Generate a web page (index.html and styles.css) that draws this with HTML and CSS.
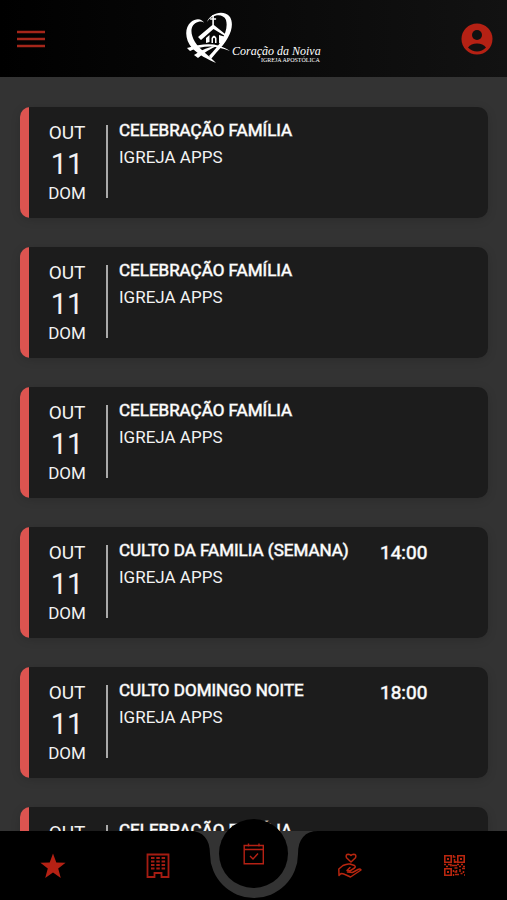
FILE: index.html
```html
<!DOCTYPE html>
<html lang="pt-BR">
<head>
<meta charset="utf-8">
<meta name="viewport" content="width=device-width, initial-scale=1">
<title>Coração da Noiva</title>
<link rel="stylesheet" href="styles.css">
</head>
<body>
<div class="app">
  <header class="topbar">
    <button class="icon-button" type="button" aria-label="Menu">
      <svg width="30" height="20" viewBox="0 0 30 20"><path d="M1 3h28M1 10h28M1 17h28" stroke="#a5261a" stroke-width="2.4"/></svg>
    </button>
    <a class="brand" href="#" aria-label="Coração da Noiva Igreja Apostólica">
      <svg width="138" height="54" viewBox="187 11 138 54" fill="#fff">
        <path d="M206 23C203 17 197 17 192 21C185 27 186 39 193 47C200 54 208 58 217 62C211 55 201 49 196 41C190 31 192 23 199 21C203 20 205 21 206 23Z"/>
        <path d="M208 21C211 12 225 8 231 16C236 25 231 38 217 52L212 58L210 55C222 43 230 30 227 19C224 12 213 13 208 21Z"/>
        <path d="M213.300 14h1.600v3.200h2.200v1.500h-2.200V24L228 34.500L226 35L214.500 28L202 39L199 36L213.300 24V18.700h-2.200V17.200h2.200Z"/>
        <path d="M207 37L210.500 34V41L207 42ZM212.500 42V37Q215 32 217.500 37V42L216 42V37.500Q215 36 214 37.500V42ZM220 34L225 35.500V43L220 42Z"/>
        <path d="M188 47Q203 42 215 43.500Q225 45.500 231 50Q219 45.500 211 45.500Q200 45.500 191 50ZM195 54Q206 46 219 44.500Q208 49 199 57Z"/>
        <text class="brand-name" x="233" y="54">Coração da Noiva</text>
        <text class="brand-sub" x="262" y="61">IGREJA APOSTÓLICA</text>
      </svg>
    </a>
    <button class="icon-button" type="button" aria-label="Perfil">
      <svg width="32" height="32" viewBox="0 0 32 32"><circle cx="16" cy="16" r="15.500" fill="#b52114"/><circle cx="16" cy="12" r="5" fill="#111"/><path d="M7 24.500Q10 20.500 16 20.500T25 24.500Q21 28.500 16 28.500T7 24.500Z" fill="#111"/></svg>
    </button>
  </header>

  <main class="events">
    <article class="event">
      <div class="date"><span class="month">OUT</span><span class="day">11</span><span class="weekday">DOM</span></div>
      <div class="info"><h2>CELEBRAÇÃO FAMÍLIA</h2><p>IGREJA APPS</p></div>
    </article>
    <article class="event">
      <div class="date"><span class="month">OUT</span><span class="day">11</span><span class="weekday">DOM</span></div>
      <div class="info"><h2>CELEBRAÇÃO FAMÍLIA</h2><p>IGREJA APPS</p></div>
    </article>
    <article class="event">
      <div class="date"><span class="month">OUT</span><span class="day">11</span><span class="weekday">DOM</span></div>
      <div class="info"><h2>CELEBRAÇÃO FAMÍLIA</h2><p>IGREJA APPS</p></div>
    </article>
    <article class="event">
      <div class="date"><span class="month">OUT</span><span class="day">11</span><span class="weekday">DOM</span></div>
      <div class="info"><h2>CULTO DA FAMILIA (SEMANA)</h2><p>IGREJA APPS</p></div>
      <time class="time">14:00</time>
    </article>
    <article class="event">
      <div class="date"><span class="month">OUT</span><span class="day">11</span><span class="weekday">DOM</span></div>
      <div class="info"><h2>CULTO DOMINGO NOITE</h2><p>IGREJA APPS</p></div>
      <time class="time">18:00</time>
    </article>
    <article class="event">
      <div class="date"><span class="month">OUT</span><span class="day">11</span><span class="weekday">DOM</span></div>
      <div class="info"><h2>CELEBRAÇÃO FAMÍLIA</h2><p>IGREJA APPS</p></div>
    </article>
  </main>

  <nav class="tabbar">
    <svg class="notch" width="128" height="69" viewBox="0 0 128 69"><path d="M0 0C13 0 20 8 20 23A44 44 0 0 0 108 23C108 8 115 0 128 0Z" fill="#333"/></svg>
    <a class="tab" href="#" aria-label="Destaques">
      <svg width="26" height="26" viewBox="0 0 26 26"><path d="M13 .500L16.300 9.500L25.600 9.700L18.200 15.500L20.800 25L13 19.600L5.200 25L7.800 15.500L.400 9.700L9.700 9.500Z" fill="#b52114"/></svg>
    </a>
    <a class="tab" href="#" aria-label="Igreja">
      <svg width="24" height="26" viewBox="0 0 24 26" fill="none" stroke="#a51c12"><path d="M1.500 1.500h21v22.500h-7v-4h-7v4h-7Z" stroke-width="1.800"/><path d="M5 5h3.500M10.300 5h3.500M15.600 5h3.500M5 8.500h3.500M10.300 8.500h3.500M15.600 8.500h3.500M5 12h3.500M10.300 12h3.500M15.600 12h3.500M5 15.500h3.500M10.300 15.500h3.500M15.600 15.500h3.500" stroke-width="1.800"/></svg>
    </a>
    <a class="tab tab-main" href="#" aria-label="Agenda">
      <svg width="22" height="22" viewBox="0 0 22 22" fill="none" stroke="#b52114" stroke-width="1.400"><path d="M1.200 2.500h19.100v18.300H1.200ZM1.200 6.500h19.100M5.500.500v3M16 .500v3M7 13l3 3 5-5.500"/></svg>
    </a>
    <a class="tab" href="#" aria-label="Contribuições">
      <svg width="26" height="26" viewBox="0 0 26 26" fill="none" stroke="#b8260f" stroke-width="1.500" stroke-linejoin="round" stroke-linecap="round"><path d="M14 9L9.500 4.800Q8.200 1.300 11.500 1.200Q13 1.200 14 2.500Q15 1.200 16.500 1.200Q19.800 1.300 18.500 4.800Z"/><path d="M2 22.500L4 20.500Q6 20.500 8 21.500L13.500 24L24 17Q23 15.500 21 16.500L15.500 19.500L10.500 19M2 22L1.800 16L6 12.500Q10 10.500 13 11L17.500 12.500Q19 13.800 17.500 15L13 17.800L10 17.500L13 14.500"/></svg>
    </a>
    <a class="tab" href="#" aria-label="QR Code">
      <svg width="21" height="21" viewBox="0 0 21 21" fill="none" stroke="#b8260f"><path d="M.800.800h6.400v6.400H.800ZM13.800.800h6.400v6.400h-6.400ZM.800 13.800h6.400v6.400H.800Z" stroke-width="1.600"/><path d="M3 4h2M16 4h2M3 17h2" stroke-width="2"/><path d="M9.500 0v2h2M10.500 4v4M12 6v2M0 9.500h2M4 9.500h3v2M2 11.500h2M8 10.500h5M13 9.500h2M17 9.500h2M19 11.500h2M15 11.500h2M10.500 13h3M9.500 15v2M12.500 15v2h-2M11 19.500h4M16 14v3M18 13.500h3M19.500 16v2M16.500 18.500h2M9.500 19v2M20 20h1" stroke-width="1.500"/></svg>
    </a>
  </nav>
</div>
</body>
</html>
```

FILE: styles.css
```css
* {
  box-sizing: border-box;
}

body {
  margin: 0;
  background: #333;
  color: #f2f2f2;
  font-family: Roboto, "Liberation Sans", sans-serif;
}

.app {
  display: flex;
  flex-direction: column;
  height: 100vh;
}

.topbar {
  display: flex;
  flex: none;
  align-items: center;
  justify-content: space-between;
  height: 77px;
  padding: 0 14px 0 16px;
  background: linear-gradient(90deg, #000, #121212);
}

.icon-button {
  display: flex;
  width: 32px;
  padding: 0;
  border: 0;
  background: none;
  cursor: pointer;
}

.icon-button svg,
.brand svg {
  display: block;
}

.brand-name {
  font: italic 12px "Liberation Serif", serif;
}

.brand-sub {
  font: 6px "Liberation Serif", serif;
}

.events {
  display: flex;
  flex: 1;
  flex-direction: column;
  gap: 29px;
  min-height: 0;
  padding: 30px 19px 0 20px;
  overflow: hidden;
}

.event {
  display: flex;
  flex: none;
  align-items: flex-start;
  min-height: 111px;
  padding: 13px 0 13px 19px;
  border-radius: 10px;
  background: linear-gradient(90deg, #dc5450 9px, #1c1c1c 9px);
  box-shadow: 0 2px 10px rgba(0, 0, 0, 0.15);
}

.date {
  display: flex;
  flex-direction: column;
  align-items: center;
  width: 56px;
}

.month {
  font-size: 19px;
  line-height: 26px;
}

.day {
  font-size: 29px;
  line-height: 36px;
}

.weekday {
  font-size: 17px;
  line-height: 22px;
}

.info {
  position: relative;
  width: 274px;
  margin-left: 11px;
  padding-left: 13px;
}

.info::before {
  content: "";
  position: absolute;
  top: 5px;
  left: 0;
  width: 2px;
  height: 73px;
  background: #aaa;
}

.info h2,
.info p {
  margin: 0;
  font-size: 17px;
  font-weight: 400;
  line-height: 20px;
  white-space: nowrap;
}

.info h2,
.time {
  color: #fff;
  -webkit-text-stroke: 1px rgba(255, 255, 255, 0.6);
}

.info p {
  margin-top: 7px;
}

.time {
  font-size: 19px;
  line-height: 26px;
}

.tabbar {
  position: relative;
  display: grid;
  flex: none;
  grid-template-rows: 100%;
  grid-template-columns: 1fr 1fr 87px 1fr 1fr;
  align-items: center;
  justify-items: center;
  height: 69px;
  background: #000;
}

.notch {
  position: absolute;
  top: 0;
  left: 50%;
  transform: translateX(-50%);
}

.tab {
  display: flex;
}

.tab-main {
  z-index: 1;
  align-items: center;
  justify-content: center;
  width: 69px;
  height: 69px;
  margin-bottom: 24px;
  border-radius: 50%;
  background: #000;
}
```
